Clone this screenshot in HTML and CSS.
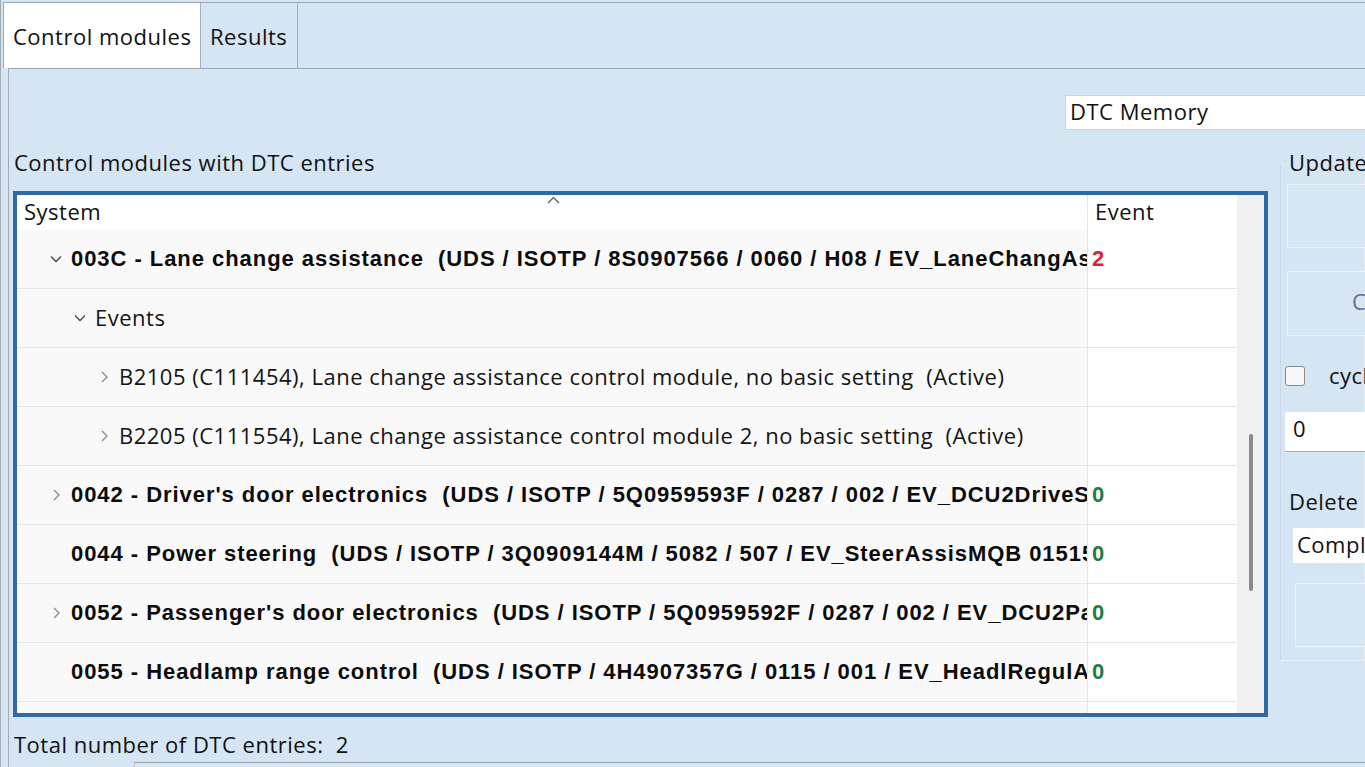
FILE: index.html
```html
<!DOCTYPE html>
<html>
<head>
<meta charset="utf-8">
<link rel="stylesheet" href="styles.css">
</head>
<body>
<div class="app">
  <div class="tabs">
    <div class="tab active">Control modules</div>
    <div class="tab">Results</div>
    <div class="tabfill"></div>
  </div>
  <div class="pane">
    <div class="toprow"><div class="combo">DTC Memory</div></div>
    <div class="content">
      <div class="leftcol">
        <div class="label">Control modules with DTC entries</div>
        <div class="table">
          <div class="grid">
            <div class="row head">
              <div class="cell sys">System
                <svg class="sortcaret" width="13" height="8" viewBox="0 0 13 8"><path d="M1 7 L6.5 1.5 L12 7" fill="none" stroke="#555" stroke-width="1.2"/></svg>
              </div>
              <div class="cell ev">Event</div>
            </div>
            <div class="row">
              <div class="cell sys l1 bold"><span class="chev"><svg width="12" height="8" viewBox="0 0 12 8"><path d="M1 1.5 L6 6.5 L11 1.5" fill="none" stroke="#444" stroke-width="1.3"/></svg></span><span class="txt">003C - Lane change assistance&nbsp; (UDS / ISOTP / 8S0907566 / 0060 / H08 / EV_LaneChangAssis 0010)</span></div>
              <div class="cell ev"><span class="num red">2</span></div>
            </div>
            <div class="row">
              <div class="cell sys l2"><span class="chev"><svg width="12" height="8" viewBox="0 0 12 8"><path d="M1 1.5 L6 6.5 L11 1.5" fill="none" stroke="#444" stroke-width="1.3"/></svg></span><span class="txt">Events</span></div>
              <div class="cell ev"></div>
            </div>
            <div class="row">
              <div class="cell sys l3"><span class="chev"><svg width="8" height="12" viewBox="0 0 8 12"><path d="M2 1 L7 6 L2 11" fill="none" stroke="#888" stroke-width="1.3"/></svg></span><span class="txt">B2105 (C111454), Lane change assistance control module, no basic setting&nbsp; (Active)</span></div>
              <div class="cell ev"></div>
            </div>
            <div class="row">
              <div class="cell sys l3"><span class="chev"><svg width="8" height="12" viewBox="0 0 8 12"><path d="M2 1 L7 6 L2 11" fill="none" stroke="#888" stroke-width="1.3"/></svg></span><span class="txt">B2205 (C111554), Lane change assistance control module 2, no basic setting&nbsp; (Active)</span></div>
              <div class="cell ev"></div>
            </div>
            <div class="row">
              <div class="cell sys l1 bold"><span class="chev"><svg width="8" height="12" viewBox="0 0 8 12"><path d="M2 1 L7 6 L2 11" fill="none" stroke="#888" stroke-width="1.3"/></svg></span><span class="txt">0042 - Driver's door electronics&nbsp; (UDS / ISOTP / 5Q0959593F / 0287 / 002 / EV_DCU2DriveSideVW37X 006001)</span></div>
              <div class="cell ev"><span class="num green">0</span></div>
            </div>
            <div class="row">
              <div class="cell sys l1 bold"><span class="chev"></span><span class="txt">0044 - Power steering&nbsp; (UDS / ISOTP / 3Q0909144M / 5082 / 507 / EV_SteerAssisMQB 015151)</span></div>
              <div class="cell ev"><span class="num green">0</span></div>
            </div>
            <div class="row">
              <div class="cell sys l1 bold"><span class="chev"><svg width="8" height="12" viewBox="0 0 8 12"><path d="M2 1 L7 6 L2 11" fill="none" stroke="#888" stroke-width="1.3"/></svg></span><span class="txt">0052 - Passenger's door electronics&nbsp; (UDS / ISOTP / 5Q0959592F / 0287 / 002 / EV_DCU2PassSideVW37X 006001)</span></div>
              <div class="cell ev"><span class="num green">0</span></div>
            </div>
            <div class="row">
              <div class="cell sys l1 bold"><span class="chev"></span><span class="txt">0055 - Headlamp range control&nbsp; (UDS / ISOTP / 4H4907357G / 0115 / 001 / EV_HeadlRegulAU64X 002001)</span></div>
              <div class="cell ev"><span class="num green">0</span></div>
            </div>
            <div class="row">
              <div class="cell sys l1 bold"><span class="chev"></span><span class="txt"></span></div>
              <div class="cell ev"></div>
            </div>
          </div>
          <div class="scroll"><div class="thumb"></div></div>
        </div>
        <div class="total">Total number of DTC entries:&nbsp; 2</div>
      </div>
      <fieldset class="group">
        <legend>Update</legend>
        <div class="btn b1"><span>Read</span></div>
        <div class="btn b2 disabled"><span>Cancel</span></div>
        <div class="checkrow"><span class="check"></span><span>cyclic</span></div>
        <div class="input">0</div>
        <div class="sublabel">Delete</div>
        <div class="combo2">Complete</div>
        <div class="btn b3"><span>Delete</span></div>
      </fieldset>
    </div>
    <div class="bottombox"></div>
  </div>
</div>
</body>
</html>
```

FILE: styles.css
```css
html, body {
  margin: 0;
  padding: 0;
  width: 1365px;
  height: 767px;
  overflow: hidden;
  background: #d6e5f4;
  font-family: "Open Sans", "Noto Sans", sans-serif;
  font-size: 22px;
  letter-spacing: 0.5px;
  color: #111;
}

.app {
  height: 767px;
  display: flex;
  flex-direction: column;
  border-left: 1px solid #a3a9b0;
  padding-left: 2px;
  box-sizing: border-box;
}

.tabs {
  margin-top: 2px;
  height: 65px;
  border-top: 1px solid #a0a6ad;
  border-left: 1px solid #a0a6ad;
  display: flex;
  flex-shrink: 0;
}

.tab {
  display: flex;
  align-items: center;
  padding: 0 9px;
  line-height: 28px;
  border-right: 1px solid #a9b0b8;
  box-sizing: border-box;
  white-space: nowrap;
}

.tab.active {
  background: #ffffff;
  width: 197px;
  padding-left: 9px;
}

.tab:not(.active) {
  width: 97px;
  padding-left: 9px;
}

.tabfill { flex: 1; }

.pane {
  flex: 1;
  border-top: 1px solid #9ea5ad;
  border-left: 1px solid #a3a9b0;
  margin-left: 5px;
  padding-top: 26px;
  padding-left: 4px;
  display: flex;
  flex-direction: column;
  min-height: 0;
}

.toprow {
  display: flex;
  justify-content: flex-end;
  height: 35px;
  flex-shrink: 0;
}

.combo {
  width: 310px;
  margin-right: -10px;
  background: #fff;
  border: 1px solid #cdd6df;
  box-sizing: border-box;
  display: flex;
  align-items: center;
  padding-left: 4px;
  padding-bottom: 4px;
  white-space: nowrap;
}

.content {
  display: flex;
  align-items: flex-start;
  gap: 12px;
  margin-top: 21px;
}

.leftcol {
  width: 1255px;
  flex-shrink: 0;
  display: flex;
  flex-direction: column;
}

.label {
  line-height: 22px;
  padding: 0 0 4px 1px;
}

.table {
  margin-top: 14px;
  height: 526px;
  border: 4px solid #3069a6;
  box-sizing: border-box;
  display: flex;
  background: #fff;
  overflow: hidden;
}

.grid {
  width: 1220px;
  flex-shrink: 0;
  overflow: hidden;
}

.row {
  display: grid;
  grid-template-columns: 1070px 150px;
  height: 59px;
}

.row.head {
  height: 35px;
}

.cell {
  box-sizing: border-box;
  display: flex;
  align-items: center;
  overflow: hidden;
  white-space: nowrap;
  border-bottom: 1px solid #e6e6e6;
  background: #f9f9f9;
}

.cell.ev {
  background: #fff;
  border-left: 1px solid #e4e4e4;
  padding-left: 4px;
}

.row.head .cell {
  background: #fff;
  border-bottom: none;
  line-height: 26px;
  padding-bottom: 3px;
}

.row.head .cell.sys {
  padding-left: 7px;
  position: relative;
}

.row.head .cell.ev {
  padding-left: 7px;
}

.sortcaret {
  position: absolute;
  left: 530px;
  top: 1px;
}

.cell.sys.l1 { padding-left: 28px; }
.cell.sys.l2 { padding-left: 52px; padding-bottom: 2px; }
.cell.sys.l3 { padding-left: 76px; padding-bottom: 2px; }
.cell.sys.l2 .chev, .cell.sys.l3 .chev { margin-top: 2px; }

.chev {
  width: 22px;
  flex-shrink: 0;
  display: flex;
  justify-content: center;
  align-items: center;
  margin-right: 4px;
}

.txt {
  color: #141414;
}

.bold .txt, .num {
  font-family: "Liberation Sans", Arial, sans-serif;
  font-weight: bold;
  font-size: 22px;
  letter-spacing: 0.95px;
  color: #0c0c0c;
}

.num.red { color: #e0202c; }
.num.green { color: #1d7d3c; }

.scroll {
  flex: 1;
  background: #f0f0f0;
  padding-top: 239px;
  padding-left: 12px;
}

.thumb {
  width: 4px;
  height: 157px;
  border-radius: 2px;
  background: #8a8a8a;
}

.total {
  margin-top: 16px;
  line-height: 22px;
  padding: 0 0 4px 1px;
}

.group {
  margin: 0;
  flex: 1;
  min-width: 0;
  border: 1px solid #e4edf7;
  border-left-color: #c9d7e6;
  padding: 0 0 11px 4px;
  box-sizing: border-box;
  height: 510px;
}

.group legend {
  padding: 0 4px 4px;
  margin-left: 0;
  line-height: 22px;
  white-space: nowrap;
}

.btn {
  box-sizing: border-box;
  width: 200px;
  background: #d8e6f4;
  border: 1px solid #eef3f9;
  border-right: none;
  display: flex;
  align-items: center;
  white-space: nowrap;
}

.btn.b1 { margin-top: 7px; height: 64px; margin-left: 2px; padding-left: 100px; }
.btn.b2 { margin-top: 23px; height: 65px; margin-left: 2px; padding-left: 64px; padding-bottom: 5px; }
.btn.b3 { margin-top: 20px; height: 64px; margin-left: 10px; padding-left: 100px; }
.btn.disabled { color: #6d6d6d; }

.checkrow {
  margin-top: 29px;
  height: 22px;
  display: flex;
  align-items: center;
  gap: 24px;
  white-space: nowrap;
}

.checkrow span:last-child {
  padding-bottom: 2px;
}

.check {
  width: 20px;
  height: 20px;
  box-sizing: border-box;
  border: 1px solid #8d8d8d;
  border-radius: 3px;
  background: #f7f7f7;
  flex-shrink: 0;
}

.input {
  margin-top: 25px;
  height: 40px;
  width: 200px;
  box-sizing: border-box;
  background: #fff;
  border-bottom: 1px solid #a5afb9;
  display: flex;
  align-items: center;
  padding-left: 8px;
  padding-bottom: 7px;
}

.sublabel {
  margin-top: 38px;
  line-height: 22px;
  padding: 0 0 4px 4px;
}

.combo2 {
  margin-top: 12px;
  margin-left: 8px;
  height: 35px;
  width: 200px;
  box-sizing: border-box;
  background: #fff;
  display: flex;
  align-items: center;
  padding-left: 4px;
  padding-bottom: 3px;
  white-space: nowrap;
  overflow: hidden;
}

.bottombox {
  margin-top: 3px;
  margin-left: 121px;
  flex: 1;
  border-top: 1px solid #98a0a8;
  border-left: 1px solid #b8c2cc;
  background: #d9e7f5;
}
```
